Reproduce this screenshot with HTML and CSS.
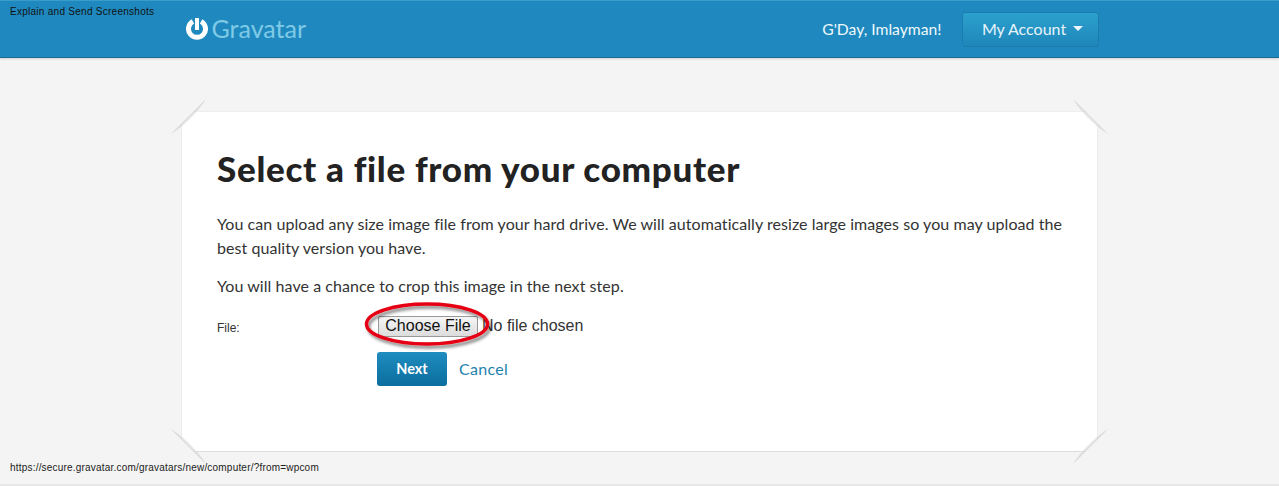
FILE: index.html
```html
<!DOCTYPE html>
<html lang="en">
<head>
<meta charset="utf-8">
<title>Gravatar - Select a file</title>
<link rel="stylesheet" href="styles.css">
</head>
<body>
<div class="caption">Explain and Send Screenshots</div>
<header class="topbar">
  <div class="topbar-inner">
    <a class="logo" href="#">
      <svg class="logo-mark" width="22" height="22" viewBox="0 0 22 22"><path d="M6.9 3.4A8.5 8.5 0 1 0 15.1 3.4" fill="none" stroke="#fff" stroke-width="5"/><rect x="9" y="0" width="4" height="12" fill="#fff"/></svg>
      <span class="logo-text">Gravatar</span>
    </a>
    <div class="account">
      <span class="greeting">G'Day, Imlayman!</span>
      <a class="account-btn" href="#">My Account<span class="caret"></span></a>
    </div>
  </div>
</header>
<main class="page">
  <section class="card">
    <svg class="fold fold-tl" width="40" height="40" viewBox="0 0 40 40"><defs><linearGradient id="g1" gradientUnits="userSpaceOnUse" x1="19.5" y1="19.5" x2="22.5" y2="22.5"><stop offset="0" stop-color="#d2d2d2"/><stop offset="1" stop-color="#e4e4e4" stop-opacity="0"/></linearGradient></defs><path d="M39 0L0 39V0Z" fill="#f4f4f4"/><path d="M37 2L2 37Q24 24 37 2Z" fill="url(#g1)"/></svg>
    <svg class="fold fold-tr" width="40" height="40" viewBox="0 0 40 40"><path d="M39 0L0 39V0Z" fill="#f4f4f4"/><path d="M37 2L2 37Q24 24 37 2Z" fill="url(#g1)"/></svg>
    <svg class="fold fold-bl" width="40" height="40" viewBox="0 0 40 40"><path d="M39 0L0 39V0Z" fill="#f4f4f4"/><path d="M37 2L2 37Q24 24 37 2Z" fill="url(#g1)"/></svg>
    <svg class="fold fold-br" width="40" height="40" viewBox="0 0 40 40"><path d="M39 0L0 39V0Z" fill="#f4f4f4"/><path d="M37 2L2 37Q24 24 37 2Z" fill="url(#g1)"/></svg>
    <h1 class="title">Select a file from your computer</h1>
    <p class="para">You can upload any size image file from your hard drive. We will automatically resize large images so you may upload the best quality version you have.</p>
    <p class="para para-crop">You will have a chance to crop this image in the next step.</p>
    <form class="upload">
      <label class="file-label">File:</label>
      <div class="file-field">
        <button class="file-btn" type="button">Choose File</button>
        <span class="file-status">No file chosen</span>
        <svg class="ring" width="134" height="50" viewBox="0 0 134 50"><defs><filter id="s" x="-10%" y="-20%" width="125%" height="150%"><feDropShadow dx="2" dy="3" stdDeviation="1.5" flood-color="#000" flood-opacity="0.45"/></filter></defs><ellipse cx="64" cy="23" rx="60.5" ry="20" fill="none" stroke="#e60012" stroke-width="3.5" filter="url(#s)"/></svg>
      </div>
      <div class="actions">
        <a class="next" href="#">Next</a>
        <a class="cancel" href="#">Cancel</a>
      </div>
    </form>
  </section>
</main>
<div class="status-url">https://secure.gravatar.com/gravatars/new/computer/?from=wpcom</div>
</body>
</html>
```
FILE: styles.css
```css
* { box-sizing: border-box; }
html, body { height: 100%; }
body {
  margin: 0;
  background: #f4f4f4;
  font-family: "Lato", "Liberation Sans", sans-serif;
  color: #333;
  overflow: hidden;
  position: relative;
}
a { text-decoration: none; }
.caption {
  position: absolute;
  left: 10px;
  top: 6px;
  font: 10px/12px "Liberation Sans", sans-serif;
  letter-spacing: 0.27px;
  color: #111;
  z-index: 2;
}
.topbar {
  height: 58px;
  background: #1f89bf;
  border-top: 1px solid #3a9cc9;
  border-bottom: 1px solid #1a6a94;
  box-shadow: 0 1px 2px rgba(0,0,0,.15);
}
.topbar-inner {
  width: 916px;
  margin: 0 auto;
  height: 100%;
  display: flex;
  justify-content: space-between;
  align-items: center;
}
.logo { display: flex; align-items: center; gap: 4px; margin-left: 4px; }
.logo-text { font-size: 25px; font-weight: 400; color: #7fcae6; line-height: 28px; margin-bottom: 3px; }
.logo-mark { display: block; }
.account { display: flex; align-items: center; gap: 20px; }
.greeting { color: #eef8fc; font-size: 15.7px; }
.account-btn {
  width: 137px;
  height: 35px;
  display: flex;
  align-items: center;
  justify-content: center;
  color: #e6f5fb;
  font-size: 16px;
  padding: 0 0 2px 5px;
  background: linear-gradient(#2ba1cd, #1f86ba);
  border: 1px solid #1c7cad;
  border-radius: 3px;
  margin-right: -1px;
}
.caret {
  width: 0; height: 0;
  margin-left: 7px;
  border-left: 5px solid transparent;
  border-right: 5px solid transparent;
  border-top: 5px solid #eef8fc;
}
.page { padding-top: 53px; }
.card {
  position: relative;
  width: 917px;
  height: 341px;
  margin: 0 auto;
  background: #fff;
  border: 1px solid #ececec;
  border-top-color: #eee;
  border-bottom-color: #ddd;
  padding: 35px 20px 0 35px;
}
.fold { position: absolute; }
.fold-tl { left: -13px; top: -15px; }
.fold-tr { right: -13px; top: -15px; transform: scaleX(-1); }
.fold-bl { left: -13px; bottom: -15px; transform: scaleY(-1); }
.fold-br { right: -13px; bottom: -15px; transform: scale(-1, -1); }
.title {
  margin: 0 0 23px;
  font-size: 35px;
  line-height: 42px;
  font-weight: 900;
  color: #222;
  letter-spacing: .7px;
}
.para {
  margin: 0;
  font-size: 16px;
  line-height: 24px;
  color: #333;
  letter-spacing: .06px;
}
.para-crop { margin-top: 14px; }
.upload {
  display: grid;
  grid-template-columns: 160px 1fr;
  margin-top: 17px;
  row-gap: 14px;
}
.file-label { font: 12px/20px "Liberation Sans", sans-serif; color: #333; padding-top: 3px; }
.file-field { position: relative; display: flex; align-items: center; gap: 4px; height: 22px; }
.file-btn {
  width: 100px;
  height: 21px;
  margin: 0 0 0 1px;
  padding: 0;
  font: 16px/18px "Liberation Sans", sans-serif;
  color: #111;
  background: linear-gradient(#f6f6f6, #dcdcdc);
  border: 1px solid #999;
  border-radius: 2px;
}
.file-status { font: 16px/20px "Liberation Sans", sans-serif; color: #333; }
.ring { position: absolute; left: -14px; top: -14px; }
.actions { grid-column: 2; display: flex; align-items: center; gap: 12px; }
.next {
  width: 70px;
  height: 34px;
  display: flex;
  align-items: center;
  justify-content: center;
  color: #fff;
  font-size: 14.5px;
  font-weight: 700;
  padding-bottom: 1px;
  background: linear-gradient(#1f8cc0, #0b6e9e);
  border-radius: 3px;
}
.cancel { color: #1f82ad; font-size: 16px; letter-spacing: .3px; margin-bottom: 2px; }
.status-url {
  position: absolute;
  left: 10px;
  top: 462px;
  font: 10px/12px "Liberation Sans", sans-serif;
  letter-spacing: .2px;
  color: #222;
}
body::after {
  content: "";
  position: absolute;
  left: 0; right: 0; top: 484px;
  height: 2px;
  background: #e8e8e8;
}
```
